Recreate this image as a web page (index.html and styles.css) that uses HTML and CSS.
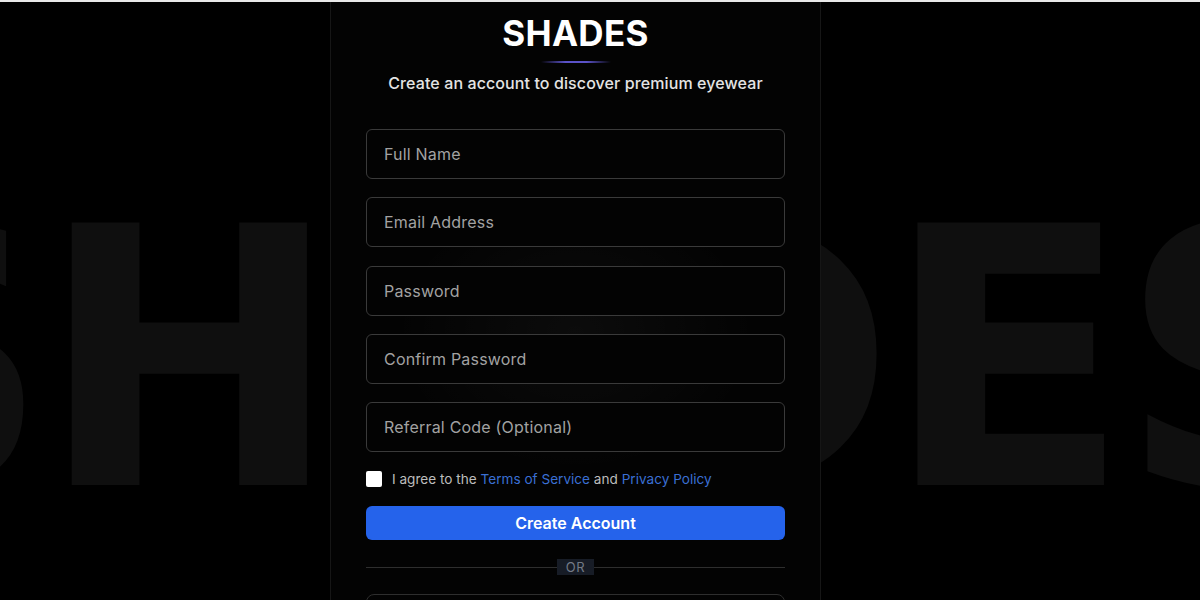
FILE: index.html
```html
<!DOCTYPE html>
<html lang="en">
<head>
<meta charset="utf-8">
<title>SHADES – Create an account</title>
<link rel="stylesheet" href="styles.css">
</head>
<body>
<div class="backdrop" aria-hidden="true">SHADES</div>
<main class="page">
  <section class="card">
    <h1 class="brand">SHADES</h1>
    <div class="accent"></div>
    <p class="subtitle">Create an account to discover premium eyewear</p>
    <form class="form">
      <input class="field" type="text" placeholder="Full Name">
      <input class="field" type="email" placeholder="Email Address">
      <input class="field" type="password" placeholder="Password">
      <input class="field" type="password" placeholder="Confirm Password">
      <input class="field" type="text" placeholder="Referral Code (Optional)">
      <label class="agree">
        <input class="check" type="checkbox">
        <span class="agree-text">I agree to the <a href="#" class="link">Terms of Service</a> and <a href="#" class="link">Privacy Policy</a></span>
      </label>
      <button type="button" class="primary">Create Account</button>
      <div class="divider"><span class="or">OR</span></div>
      <button type="button" class="secondary"></button>
    </form>
  </section>
</main>
</body>
</html>
```

FILE: styles.css
```css
* { box-sizing: border-box; }

html, body {
  margin: 0;
  height: 100%;
  overflow: hidden;
}

body {
  background: #000;
  border-top: 2px solid #e9e9e9;
  font-family: Inter, "Noto Sans", sans-serif;
  color: #fff;
  position: relative;
}

.backdrop {
  position: absolute;
  left: 0;
  right: 0;
  top: 179px;
  display: flex;
  justify-content: center;
  padding-right: 42px;
  font-family: "DejaVu Sans", sans-serif;
  font-weight: 700;
  font-size: 360px;
  line-height: 1;
  letter-spacing: -11px;
  color: #0f0f0f;
  white-space: nowrap;
  pointer-events: none;
}

.page {
  position: relative;
  display: flex;
  justify-content: center;
  padding-right: 49px;
  height: 100%;
}

.card {
  width: 491px;
  height: 700px;
  padding: 10px 35px 0;
  background:
    radial-gradient(ellipse 260px 200px at 50% 330px, rgba(255,255,255,0.035), rgba(255,255,255,0) 70%),
    rgba(3,3,3,0.96);
  border-left: 1px solid #161616;
  border-right: 1px solid #161616;
  display: flex;
  flex-direction: column;
  align-items: center;
}

.brand {
  margin: 0;
  font-size: 35px;
  line-height: 42px;
  font-weight: 700;
  letter-spacing: 0.3px;
  color: #fff;
}

.accent {
  margin-top: 7px;
  width: 70px;
  height: 2px;
  background: linear-gradient(90deg, rgba(90,80,200,0), #5b52c8 35%, #5b52c8 65%, rgba(90,80,200,0));
}

.subtitle {
  margin: 9px 0 0;
  font-size: 16px;
  line-height: 22px;
  letter-spacing: 0.1px;
  color: #e4e4e4;
  font-weight: 500;
}

.form {
  margin-top: 35px;
  width: 100%;
  display: flex;
  flex-direction: column;
}

.field {
  height: 50px;
  width: 100%;
  margin: 0 0 18.25px;
  padding: 0 17px;
  background: #030303;
  border: 1px solid #3a3a3a;
  border-radius: 6px;
  font-family: inherit;
  font-size: 16px;
  letter-spacing: 0.2px;
  color: #eee;
  outline: none;
}
.field:last-of-type { margin-bottom: 0; }
.field::placeholder { color: #a2a2a2; }

.agree {
  margin-top: 18px;
  display: flex;
  align-items: center;
  gap: 10px;
  font-size: 13.6px;
  line-height: 18px;
  color: #bdbdbd;
}

.check {
  appearance: none;
  margin: 0;
  width: 16px;
  height: 16px;
  border-radius: 2px;
  background: #fff;
  flex: none;
}

.link {
  color: #3a6fd4;
  text-decoration: none;
}

.primary {
  margin-top: 18px;
  height: 34px;
  width: 100%;
  border: 0;
  border-radius: 6px;
  background: #2563eb;
  color: #fff;
  font-family: inherit;
  font-size: 16px;
  font-weight: 600;
}

.divider {
  margin-top: 19px;
  height: 16px;
  display: flex;
  align-items: center;
  justify-content: center;
  background: linear-gradient(#2e2e2e, #2e2e2e) center / 100% 1px no-repeat;
}

.or {
  background: #171c26;
  color: #737a86;
  font-size: 13px;
  line-height: 16px;
  padding: 0 9px;
  letter-spacing: 0.5px;
}

.secondary {
  margin-top: 19px;
  height: 44px;
  width: 100%;
  background: #030303;
  border: 1px solid #2e2e2e;
  border-radius: 8px;
}
```
